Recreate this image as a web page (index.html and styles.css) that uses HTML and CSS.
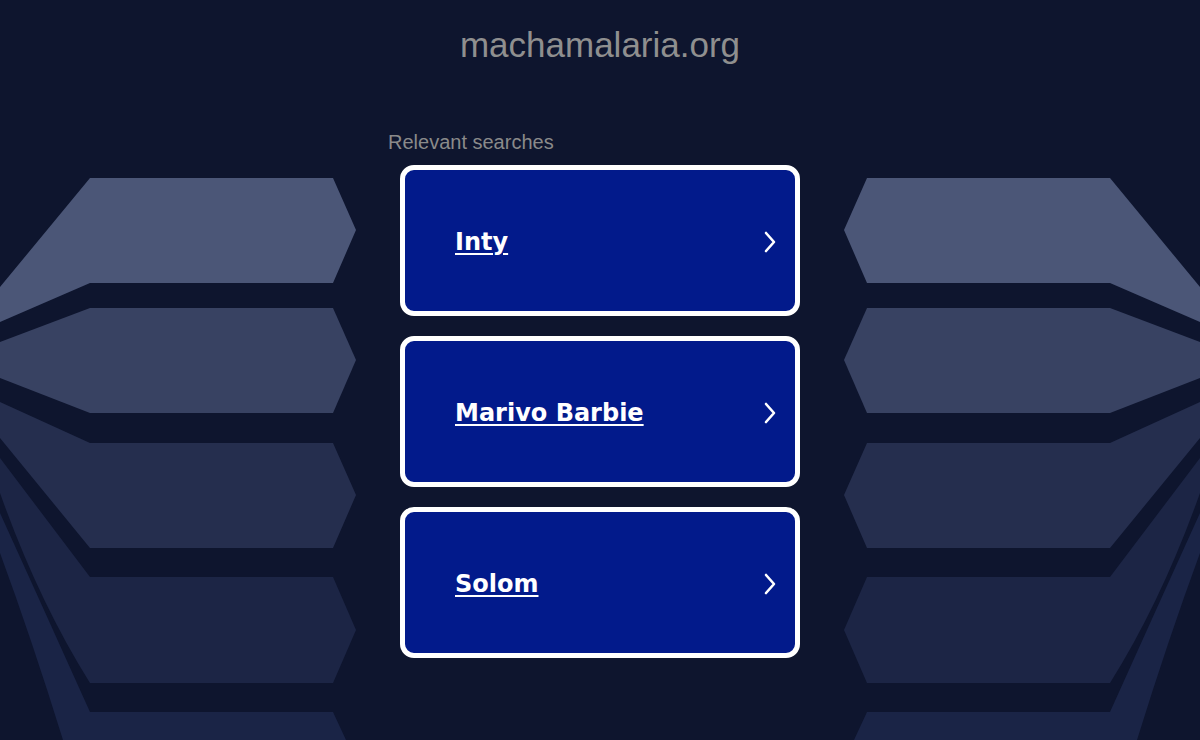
FILE: index.html
```html
<!DOCTYPE html>
<html lang="en">
<head>
<meta charset="utf-8">
<title>machamalaria.org</title>
<link rel="stylesheet" href="styles.css">
</head>
<body>
<svg class="backdrop" viewBox="0 0 1200 740" width="1200" height="740" aria-hidden="true">
  <defs>
    <g id="slabs">
      <path fill="#4b5677" d="M0 287 L90 178 L333 178 L356 230 L333 283 L90 283 L0 322 Z"/>
      <path fill="#384262" d="M0 342 L90 308 L333 308 L356 360 L333 413 L90 413 L0 378 Z"/>
      <path fill="#252e4e" d="M0 402 L90 443 L333 443 L356 495 L333 548 L90 548 L0 438 Z"/>
      <path fill="#1c2545" d="M0 458 L90 577 L333 577 L356 630 L333 683 L90 683 Q38 600 0 493 Z"/>
      <path fill="#1a2446" d="M0 513 Q45 612 90 712 L333 712 L346 740 L63 740 Q32 640 0 553 Z"/>
    </g>
  </defs>
  <use href="#slabs"/>
  <use href="#slabs" transform="translate(1200 0) scale(-1 1)"/>
</svg>

<div class="page">
  <header class="site-header">
    <h1 class="domain">machamalaria.org</h1>
  </header>

  <main class="results">
    <h2 class="results-title">Relevant searches</h2>
    <div class="cards">
      <a class="card" href="#">
        <span class="card-label">Inty</span>
        <svg class="chevron" viewBox="0 0 14 22" width="14" height="22"><path d="M3 2 L11 11 L3 20"/></svg>
      </a>
      <a class="card" href="#">
        <span class="card-label">Marivo Barbie</span>
        <svg class="chevron" viewBox="0 0 14 22" width="14" height="22"><path d="M3 2 L11 11 L3 20"/></svg>
      </a>
      <a class="card" href="#">
        <span class="card-label">Solom</span>
        <svg class="chevron" viewBox="0 0 14 22" width="14" height="22"><path d="M3 2 L11 11 L3 20"/></svg>
      </a>
    </div>
  </main>
</div>
</body>
</html>
```

FILE: styles.css
```css
html, body {
  margin: 0;
  padding: 0;
}

body {
  background: #0e152e;
  width: 1200px;
  height: 740px;
  overflow: hidden;
  position: relative;
  font-family: "Liberation Sans", Arial, sans-serif;
}

.backdrop {
  position: absolute;
  left: 0;
  top: 0;
  z-index: 0;
  display: block;
}

.page {
  position: relative;
  z-index: 1;
  display: flex;
  flex-direction: column;
  align-items: center;
}

.site-header {
  padding-top: 25px;
}

.domain {
  margin: 0;
  font-family: "Liberation Sans", Arial, sans-serif;
  font-weight: normal;
  font-size: 35px;
  line-height: 40px;
  color: #8f8f8f;
  text-align: center;
}

.results {
  margin-top: 65px;
  width: 424px;
  display: flex;
  flex-direction: column;
}

.results-title {
  margin: 0 0 11px 0;
  font-family: "Liberation Sans", Arial, sans-serif;
  font-weight: normal;
  font-size: 20px;
  line-height: 24px;
  color: #8a8a8a;
}

.cards {
  display: flex;
  flex-direction: column;
  gap: 20px;
  padding: 0 12px;
}

.card {
  box-sizing: border-box;
  height: 151px;
  border: 5px solid #ffffff;
  border-radius: 14px;
  background: #021a8b;
  display: flex;
  align-items: center;
  justify-content: space-between;
  padding: 3px 18px 0 50px;
  text-decoration: none;
}

.card-label {
  font-family: "DejaVu Sans", Verdana, sans-serif;
  font-weight: bold;
  font-size: 24px;
  color: #ffffff;
  text-decoration: underline;
  text-decoration-thickness: 2px;
  text-underline-offset: 3px;
}

.chevron {
  display: block;
}

.chevron path {
  fill: none;
  stroke: #ffffff;
  stroke-width: 2.6;
  stroke-linecap: round;
  stroke-linejoin: round;
}
```
